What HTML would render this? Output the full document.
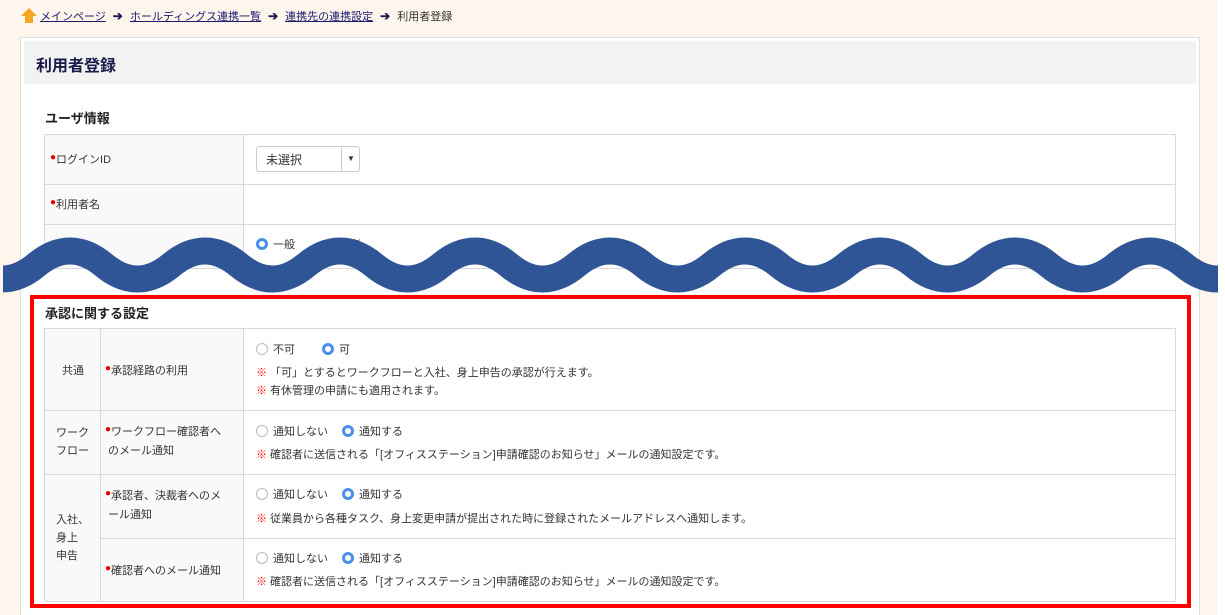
<!DOCTYPE html>
<html style="overflow:hidden"><head><meta charset="utf-8"><style>
*{box-sizing:border-box;margin:0;padding:0}
html,body{width:1225px;height:615px;overflow:hidden}
body{background:#fff;position:relative;font-family:"Liberation Sans","Noto Sans CJK JP",sans-serif;color:#333;font-size:11px}
.a{position:absolute}
.cream{left:0;top:0;width:1217px;height:615px;background:#fef6ec}
.panel{left:20px;top:37px;width:1180px;height:578px;background:#fff;border:1px solid #ddd;border-bottom:none}
.hd{left:24px;top:41px;width:1172px;height:43px;background:#f2f2f2}
.bc a{color:#1a1a6e;text-decoration:underline}
.arr{font-weight:bold;color:#1a1a4a;margin:0 7px;font-size:12px}
.l{background:#f9f9f9;border:1px solid #d9d9d9}
.c{background:#fff;border:1px solid #d9d9d9}
.dot{color:#e00;font-size:10px;position:relative;top:-3px}
.r{display:inline-block;width:12px;height:12px;border-radius:50%;border:1px solid #bbb;vertical-align:-2px;margin-right:5px;background:#fff}
.r.on{border:3px solid #4a8fe7}
.n{color:#f00}
.t{line-height:18px}
</style></head><body>
<div class="a cream"></div>
<div class="a panel"></div>
<div class="a hd"></div>
<div class="a bc" style="left:20px;top:8px;font-size:11px">
<svg width="18" height="15" viewBox="0 0 16 15" style="vertical-align:-3px"><path d="M8 0 L16 8 L12 8 L12 15 L4 15 L4 8 L0 8Z" fill="#f5a623"/></svg><a style="margin-left:2px">メインページ</a><span class="arr">➔</span><a>ホールディングス連携一覧</a><span class="arr">➔</span><a>連携先の連携設定</a><span class="arr">➔</span><span>利用者登録</span></div>
<div class="a" style="left:36px;top:52px;font-size:16px;font-weight:bold;color:#1a1a4a">利用者登録</div>
<div class="a" style="left:45px;top:108px;font-size:13px;font-weight:bold;color:#222">ユーザ情報</div>

<div class="a l" style="left:44px;top:134px;width:200px;height:51px"></div>
<div class="a c" style="left:243px;top:134px;width:933px;height:51px"></div>
<div class="a l" style="left:44px;top:184px;width:200px;height:41px"></div>
<div class="a c" style="left:243px;top:184px;width:933px;height:41px"></div>
<div class="a l" style="left:44px;top:224px;width:200px;height:45px"></div>
<div class="a c" style="left:243px;top:224px;width:933px;height:45px"></div>
<div class="a" style="left:50px;top:151px"><span class="dot">●</span>ログインID</div>
<div class="a" style="left:50px;top:196px"><span class="dot">●</span>利用者名</div>
<div class="a" style="left:256px;top:146px;width:104px;height:26px;border:1px solid #ccc;border-radius:3px;background:#fff"><span style="position:absolute;left:9px;top:4px;font-size:12px">未選択</span><span style="position:absolute;left:84px;top:0;height:24px;border-left:1px solid #ccc;width:19px;text-align:center;font-size:8px;line-height:24px">▼</span></div>
<div class="a" style="left:256px;top:236px"><span class="r on"></span>一般　　　　理者</div>

<svg class="a" style="left:0;top:0" width="1225" height="615"><defs><clipPath id="cp"><rect x="3" y="0" width="1215" height="615"/></clipPath></defs><path clip-path="url(#cp)" d="M-31.25 265 Q2.5 293 36.25 265 T103.75 265 T171.25 265 T238.75 265 T306.25 265 T373.75 265 T441.25 265 T508.75 265 T576.25 265 T643.75 265 T711.25 265 T778.75 265 T846.25 265 T913.75 265 T981.25 265 T1048.75 265 T1116.25 265 T1183.75 265 T1251.25 265" fill="none" stroke="#2f5597" stroke-width="27"/></svg>

<div class="a" style="left:30px;top:295px;width:1161px;height:313px;border:4px solid #f00"></div>
<div class="a" style="left:45px;top:303px;font-size:13px;font-weight:bold;color:#222">承認に関する設定</div>

<div class="a l" style="left:44px;top:328px;width:57px;height:83px"></div>
<div class="a l" style="left:100px;top:328px;width:144px;height:83px"></div>
<div class="a c" style="left:243px;top:328px;width:933px;height:83px"></div>
<div class="a l" style="left:44px;top:410px;width:57px;height:65px"></div>
<div class="a l" style="left:100px;top:410px;width:144px;height:65px"></div>
<div class="a c" style="left:243px;top:410px;width:933px;height:65px"></div>
<div class="a l" style="left:44px;top:474px;width:57px;height:128px"></div>
<div class="a l" style="left:100px;top:474px;width:144px;height:65px"></div>
<div class="a c" style="left:243px;top:474px;width:933px;height:65px"></div>
<div class="a l" style="left:100px;top:538px;width:144px;height:64px"></div>
<div class="a c" style="left:243px;top:538px;width:933px;height:64px"></div>

<div class="a" style="left:62px;top:362px">共通</div>
<div class="a t" style="left:56px;top:424px">ワーク<br>フロー</div>
<div class="a t" style="left:56px;top:511px">入社、<br>身上<br>申告</div>
<div class="a" style="left:105px;top:362px"><span class="dot">●</span>承認経路の利用</div>
<div class="a t" style="left:105px;top:423px"><span class="dot">●</span>ワークフロー確認者へ<br>&nbsp;のメール通知</div>
<div class="a t" style="left:105px;top:487px"><span class="dot">●</span>承認者、決裁者へのメ<br>&nbsp;ール通知</div>
<div class="a" style="left:105px;top:562px"><span class="dot">●</span>確認者へのメール通知</div>

<div class="a" style="left:256px;top:341px"><span class="r"></span>不可<span style="margin-left:27px"></span><span class="r on"></span>可</div>
<div class="a" style="left:256px;top:364px"><span class="n">※</span> 「可」とするとワークフローと入社、身上申告の承認が行えます。</div>
<div class="a" style="left:256px;top:382px"><span class="n">※</span> 有休管理の申請にも適用されます。</div>
<div class="a" style="left:256px;top:423px"><span class="r"></span>通知しない<span style="margin-left:14px"></span><span class="r on"></span>通知する</div>
<div class="a" style="left:256px;top:446px"><span class="n">※</span> 確認者に送信される「[オフィスステーション]申請確認のお知らせ」メールの通知設定です。</div>
<div class="a" style="left:256px;top:486px"><span class="r"></span>通知しない<span style="margin-left:14px"></span><span class="r on"></span>通知する</div>
<div class="a" style="left:256px;top:510px"><span class="n">※</span> 従業員から各種タスク、身上変更申請が提出された時に登録されたメールアドレスへ通知します。</div>
<div class="a" style="left:256px;top:550px"><span class="r"></span>通知しない<span style="margin-left:14px"></span><span class="r on"></span>通知する</div>
<div class="a" style="left:256px;top:573px"><span class="n">※</span> 確認者に送信される「[オフィスステーション]申請確認のお知らせ」メールの通知設定です。</div>
</body></html>
